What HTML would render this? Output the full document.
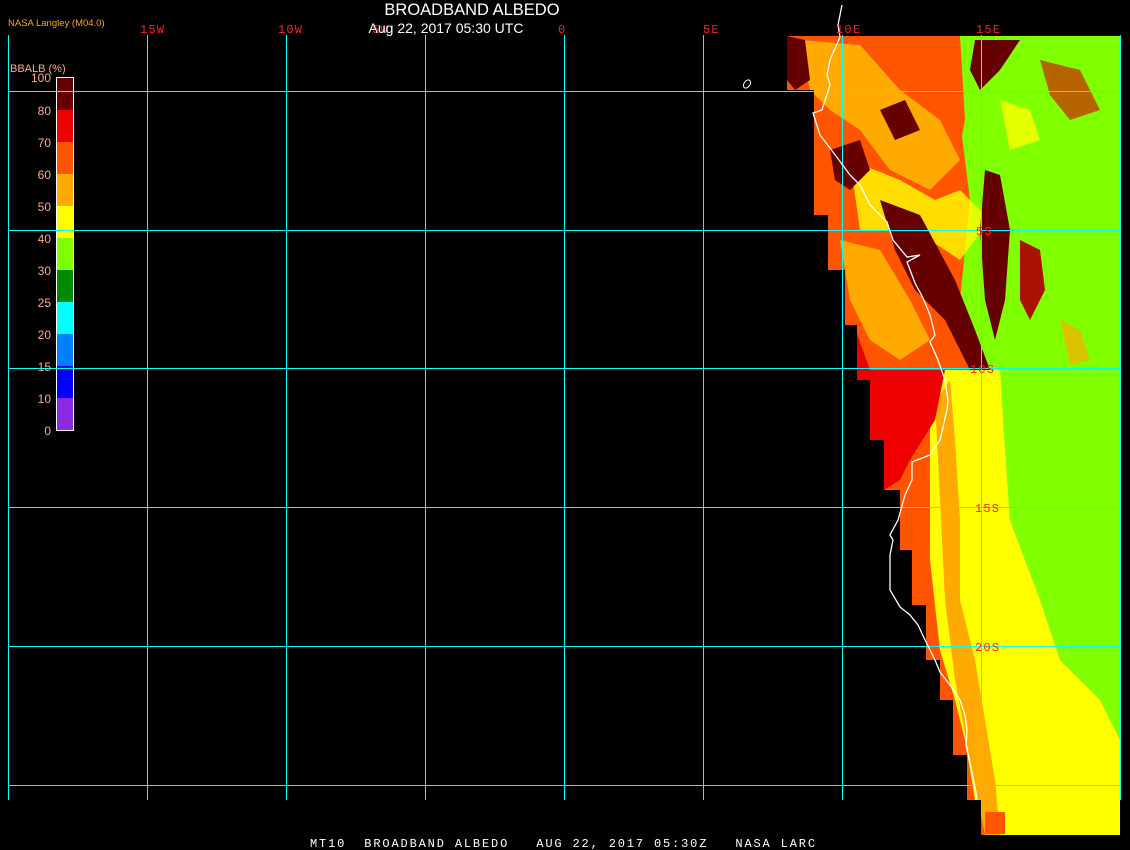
<!DOCTYPE html>
<html><head><style>
html,body{margin:0;padding:0;background:#000;}
body{width:1130px;height:850px;overflow:hidden;position:relative;}
svg{position:absolute;left:0;top:0;}
</style></head><body>
<svg width="1130" height="850" viewBox="0 0 1130 850" xmlns="http://www.w3.org/2000/svg">
<defs>
<clipPath id="land"><path d="M787,36 H1120 V835 H981 V800 H967 V755 H953 V700 H940 V660 H926 V605 H912 V550 H900 V490 H884 V440 H870 V380 H857 V325 H845 V270 H828 V215 H814 V90 H787 Z"/></clipPath>
</defs>
<g clip-path="url(#land)">
<rect x="780" y="30" width="350" height="810" fill="#ff5500"/>
<path d="M960,36 H1120 V740 L1100,700 L1060,660 L1040,600 L1010,520 L1000,420 L975,370 L960,300 L970,200 L960,120 Z" fill="#80ff00"/>
<path d="M930,370 L1000,370 L1005,450 L1010,520 L1040,600 L1060,660 L1100,700 L1120,740 V835 H990 L975,800 L965,740 L955,700 L940,650 L930,560 Z" fill="#ffff00"/>
<path d="M910,440 L935,400 L940,500 L945,600 L955,680 L970,760 L985,835 H1000 L995,780 L985,720 L975,660 L960,600 L960,520 L955,440 L950,380 Z" fill="#ffaa00"/>
<path d="M857,330 L945,370 L935,420 L910,460 L900,480 L884,490 L870,440 L857,380 Z" fill="#ee0000"/>
<path d="M787,36 H960 L965,120 L950,200 L940,260 L960,300 L950,370 L870,370 L845,300 L828,230 L805,150 L787,90 Z" fill="#ff5500"/>
<path d="M800,40 L860,45 L900,90 L940,120 L960,160 L930,190 L890,170 L860,130 L830,110 L810,90 Z" fill="#ffaa00"/>
<path d="M850,160 L900,180 L935,200 L960,190 L990,220 L960,260 L930,240 L900,230 L860,230 Z" fill="#ffff00" opacity="0.8"/>
<path d="M840,240 L880,250 L910,300 L930,340 L900,360 L870,340 L850,300 Z" fill="#ffaa00"/>
<path d="M880,200 L920,215 L955,280 L975,330 L990,370 L970,370 L945,320 L915,290 L895,250 Z" fill="#660000"/>
<path d="M985,170 L1000,175 L1010,230 L1005,300 L995,340 L985,300 L980,230 Z" fill="#660000"/>
<path d="M975,40 L1020,40 L1000,70 L980,90 L970,70 Z" fill="#660000"/>
<path d="M787,36 L805,40 L810,80 L795,90 L787,80 Z" fill="#660000"/>
<path d="M830,150 L860,140 L870,170 L850,190 L835,180 Z" fill="#660000"/>
<path d="M880,110 L905,100 L920,130 L895,140 Z" fill="#660000"/>
<path d="M1020,240 L1040,250 L1045,290 L1030,320 L1020,300 Z" fill="#aa1100"/>
<path d="M1040,60 L1080,70 L1100,110 L1070,120 L1050,95 Z" fill="#cc2200" opacity="0.7"/>
<path d="M1060,320 L1080,330 L1090,360 L1070,365 Z" fill="#ffaa00" opacity="0.7"/>
<path d="M1000,100 L1030,110 L1040,140 L1010,150 Z" fill="#ffff00" opacity="0.8"/>
<rect x="985" y="812" width="20" height="22" fill="#ff5500"/>
</g>
<g fill="#00ffff">
<rect x="8" y="35" width="1" height="765"/>
<rect x="147" y="35" width="1" height="765"/>
<rect x="286" y="35" width="1" height="765"/>
<rect x="425" y="35" width="1" height="765"/>
<rect x="564" y="35" width="1" height="765"/>
<rect x="703" y="35" width="1" height="765"/>
<rect x="842" y="35" width="1" height="765"/>
<rect x="981" y="35" width="1" height="765"/>
<rect x="1120" y="35" width="1" height="765"/>
<rect x="8" y="91" width="1113" height="1"/>
<rect x="8" y="230" width="1113" height="1"/>
<rect x="8" y="368" width="1113" height="1"/>
<rect x="8" y="507" width="1113" height="1"/>
<rect x="8" y="646" width="1113" height="1"/>
<rect x="8" y="785" width="1113" height="1"/>
</g>
<polyline fill="none" stroke="#fff" stroke-width="1.3" points="842,5 838,25 840,37 830,60 827,75 830,85 822,110 813,113 820,135 830,148 850,175 860,185 870,205 887,222 893,240 907,257 920,255 907,262 915,283 923,298 930,315 935,335 930,342 938,360 945,380 948,400 947,410 940,440 930,455 912,462 912,480 905,495 898,520 890,535 893,540 890,555 890,590 900,607 910,615 918,625 925,640 935,660 940,672 950,685 960,700 965,715 967,730 966,745 972,772 977,798"/>
<ellipse cx="747" cy="84" rx="3" ry="4.5" transform="rotate(35 747 84)" fill="none" stroke="#fff" stroke-width="1"/>
<g font-family="Liberation Mono, monospace" font-size="12" fill="#ff2020" letter-spacing="1.2">
<text x="140" y="33">15W</text>
<text x="278" y="33">10W</text>
<text x="372" y="33">5W</text>
<text x="558" y="33">0</text>
<text x="703" y="33">5E</text>
<text x="836" y="33">10E</text>
<text x="976" y="33">15E</text>
<text x="976" y="235">5S</text>
<text x="970" y="373">10S</text>
<text x="975" y="512">15S</text>
<text x="975" y="651">20S</text>
</g>
<text x="472" y="15" text-anchor="middle" font-family="Liberation Sans, sans-serif" font-size="16.5" fill="#fff">BROADBAND ALBEDO</text>
<text x="446" y="33" text-anchor="middle" font-family="Liberation Sans, sans-serif" font-size="14" fill="#fff">Aug 22, 2017 05:30 UTC</text>
<text x="8" y="26" font-family="Liberation Sans, sans-serif" font-size="9.5" fill="#ffaa00">NASA Langley (M04.0)</text>
<text x="10" y="72" font-family="Liberation Sans, sans-serif" font-size="11" fill="#ffaa80">BBALB (%)</text>
<rect x="57" y="77" width="17" height="33" fill="#660000"/>
<rect x="57" y="110" width="17" height="32" fill="#ee0000"/>
<rect x="57" y="142" width="17" height="32" fill="#ff5500"/>
<rect x="57" y="174" width="17" height="32" fill="#ffaa00"/>
<rect x="57" y="206" width="17" height="32" fill="#ffff00"/>
<rect x="57" y="238" width="17" height="32" fill="#80ff00"/>
<rect x="57" y="270" width="17" height="32" fill="#008800"/>
<rect x="57" y="302" width="17" height="32" fill="#00ffff"/>
<rect x="57" y="334" width="17" height="32" fill="#0080ff"/>
<rect x="57" y="366" width="17" height="32" fill="#0000ff"/>
<rect x="57" y="398" width="17" height="32" fill="#8a2be2"/>
<rect x="56.5" y="77.5" width="17" height="353" fill="none" stroke="#fff" stroke-width="1"/>
<g fill="#00ffff">
<rect x="8" y="91" width="70" height="1"/>
<rect x="8" y="230" width="70" height="1"/>
<rect x="8" y="368" width="70" height="1"/>
</g>
<g font-family="Liberation Sans, sans-serif" font-size="12" fill="#ffaa80" text-anchor="end">
<text x="51" y="82">100</text>
<text x="51" y="115">80</text>
<text x="51" y="147">70</text>
<text x="51" y="179">60</text>
<text x="51" y="211">50</text>
<text x="51" y="243">40</text>
<text x="51" y="275">30</text>
<text x="51" y="307">25</text>
<text x="51" y="339">20</text>
<text x="51" y="371">15</text>
<text x="51" y="403">10</text>
<text x="51" y="435">0</text>
</g>
<text x="310" y="847" font-family="Liberation Mono, monospace" font-size="12" fill="#fff" xml:space="preserve" letter-spacing="1.85">MT10  BROADBAND ALBEDO   AUG 22, 2017 05:30Z   NASA LARC</text>
</svg>
</body></html>
